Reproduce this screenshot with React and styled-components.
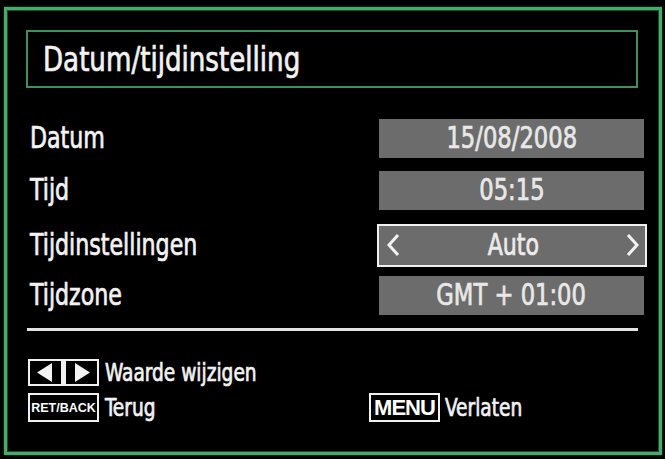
import React from 'react'
import styled, { createGlobalStyle } from 'styled-components'

const GlobalStyle = createGlobalStyle`
  html, body {
    margin: 0;
    padding: 0;
    background: #000;
  }
  body {
    width: 665px;
    height: 459px;
    overflow: hidden;
    font-family: "DejaVu Sans Condensed", "DejaVu Sans", sans-serif;
    color: #f2f2f2;
  }
`

const Screen = styled.div`
  width: 665px;
  height: 459px;
  box-sizing: border-box;
  padding: 7px 4px 0 4px;
  background: #000;
`

const Frame = styled.div`
  width: 658px;
  height: 448px;
  box-sizing: border-box;
  border: 3px solid #48ab6c;
  box-shadow: inset 0 0 0 1px #1d4a2d, 0 0 2px #2c6e44;
  padding: 20px 12px 0 19px;
  display: flex;
  flex-direction: column;
`

const TitleBox = styled.div`
  width: 612px;
  height: 58px;
  box-sizing: border-box;
  border: 2px solid #3d9159;
  display: flex;
  align-items: center;
  padding-left: 15px;
`

const Txt = styled.span`
  display: inline-block;
  white-space: nowrap;
  font-size: ${p => p.$size}px;
  line-height: 1;
  -webkit-text-stroke: 0.7px currentColor;
  transform: scaleX(${p => p.$sx ?? 0.82});
  transform-origin: ${p => p.$origin || 'left'} center;
`

const Rows = styled.div`
  margin-top: 24px;
  display: grid;
  grid-template-columns: 1fr 270px;
  grid-template-rows: 52px 52px 58px 42px;
`

const Label = styled.div`
  display: flex;
  align-items: center;
  padding-left: 4px;
`

const Cell = styled.div`
  display: flex;
  align-items: center;
`

const Value = styled.div`
  width: 265px;
  height: 39px;
  margin-left: 2px;
  background: #6c6c6c;
  color: #e8e8e8;
  display: flex;
  align-items: center;
  justify-content: center;
`

const Picker = styled.div`
  width: 270px;
  height: 43px;
  box-sizing: border-box;
  border: 2px solid #f0f0f0;
  background: #6c6c6c;
  color: #ececec;
  display: flex;
  align-items: center;
  justify-content: space-between;
  padding: 0 5px 0 7px;
`

const Separator = styled.div`
  margin-top: 12px;
  margin-left: 1px;
  width: 611px;
  height: 3px;
  background: #e2e2e2;
`

const Footer = styled.div`
  margin-top: 28px;
  display: grid;
  grid-template-columns: 341px auto;
  grid-template-rows: 27px 29px;
  row-gap: 7px;
  padding-left: 2px;
`

const Hint = styled.div`
  display: flex;
  align-items: center;
  gap: ${p => p.$gap ?? 6}px;
`

const KeyBox = styled.div`
  width: 71px;
  height: 29px;
  box-sizing: border-box;
  border: 2px solid #f0f0f0;
  background: #000;
  display: flex;
  align-items: center;
  justify-content: center;
  color: #fff;
  font-family: "Liberation Sans", Arial, sans-serif;
  font-weight: bold;
  font-size: ${p => p.$size}px;
  letter-spacing: ${p => p.$spacing ?? 0}px;
  overflow: hidden;
`

const Chevron = ({ dir }) => (
  <svg width="14" height="24" viewBox="0 0 14 24">
    <polyline
      points={dir === 'left' ? '12,2 3,12 12,22' : '2,2 11,12 2,22'}
      fill="none"
      stroke="#f2f2f2"
      strokeWidth="3"
    />
  </svg>
)

const ArrowKey = () => (
  <svg width="71" height="27" viewBox="0 0 71 27">
    <rect x="1" y="1" width="69" height="25" fill="#000" stroke="#f0f0f0" strokeWidth="2" />
    <rect x="33" y="1" width="5" height="25" fill="#f0f0f0" />
    <polygon points="9,13.5 24,4 24,23" fill="#f4f4f4" />
    <polygon points="62,13.5 47,4 47,23" fill="#f4f4f4" />
  </svg>
)

const rows = [
  { label: 'Datum', value: '15/08/2008' },
  { label: 'Tijd', value: '05:15' },
  { label: 'Tijdinstellingen', value: 'Auto', picker: true },
  { label: 'Tijdzone', value: 'GMT + 01:00' },
]

export default function App() {
  return (
    <>
      <GlobalStyle />
      <Screen>
        <Frame>
          <TitleBox>
            <Txt $size={33} $sx={0.88}>Datum/tijdinstelling</Txt>
          </TitleBox>

          <Rows>
            {rows.map(r => (
              <React.Fragment key={r.label}>
                <Label>
                  <Txt $size={30}>{r.label}</Txt>
                </Label>
                <Cell>
                  {r.picker ? (
                    <Picker>
                      <Chevron dir="left" />
                      <Txt $size={30} $origin="center">{r.value}</Txt>
                      <Chevron dir="right" />
                    </Picker>
                  ) : (
                    <Value>
                      <Txt $size={30} $sx={0.84} $origin="center">{r.value}</Txt>
                    </Value>
                  )}
                </Cell>
              </React.Fragment>
            ))}
          </Rows>

          <Separator />

          <Footer>
            <Hint>
              <ArrowKey />
              <Txt $size={24} $sx={0.86}>Waarde wijzigen</Txt>
            </Hint>
            <div />
            <Hint>
              <KeyBox $size={12.5}>RET/BACK</KeyBox>
              <Txt $size={24} $sx={0.86}>Terug</Txt>
            </Hint>
            <Hint $gap={5}>
              <KeyBox $size={22} $spacing={-1}>MENU</KeyBox>
              <Txt $size={24} $sx={0.86}>Verlaten</Txt>
            </Hint>
          </Footer>
        </Frame>
      </Screen>
    </>
  )
}
